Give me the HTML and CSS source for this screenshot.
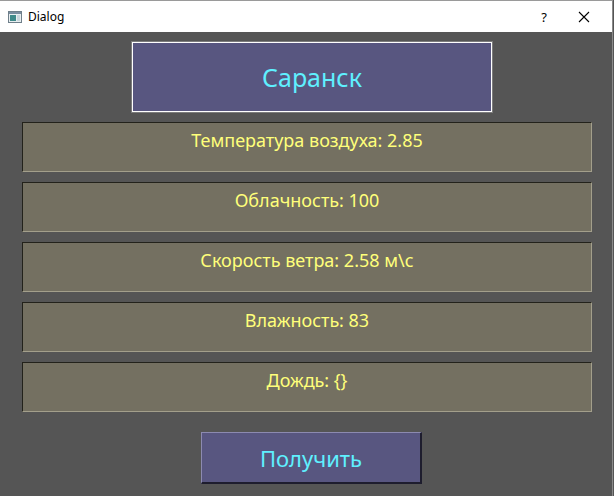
FILE: index.html
```html
<!DOCTYPE html>
<html>
<head>
<meta charset="utf-8">
<link rel="stylesheet" href="styles.css">
</head>
<body>
<div class="window">
  <div class="titlebar">
    <div class="title-left">
      <svg class="app-icon" width="14" height="12" viewBox="0 0 14 12">
        <rect x="0.5" y="0.5" width="13" height="11" fill="#e8eef0" stroke="#6f7f8a"/>
        <rect x="1" y="1" width="12" height="2" fill="#7a8ea0"/>
        <rect x="2" y="4" width="6" height="6" fill="#3f8a8a"/>
        <rect x="9" y="4" width="3" height="6" fill="#c9d6dc"/>
      </svg>
      <span class="title">Dialog</span>
    </div>
    <div class="title-right">
      <span class="help">?</span>
      <svg class="close" width="12" height="12" viewBox="0 0 12 12">
        <path d="M1 1 L11 11 M11 1 L1 11" stroke="#000" stroke-width="1.1" fill="none"/>
      </svg>
    </div>
  </div>
  <div class="content">
    <div class="city">Саранск</div>
    <div class="rows">
      <div class="row">Температура воздуха: 2.85</div>
      <div class="row">Облачность: 100</div>
      <div class="row">Скорость ветра: 2.58 м\с</div>
      <div class="row">Влажность: 83</div>
      <div class="row">Дождь: {}</div>
    </div>
    <div class="btn">Получить</div>
  </div>
</div>
</body>
</html>
```

FILE: styles.css
```css
html, body {
  margin: 0;
  padding: 0;
  background: #555555;
}
body {
  width: 614px;
  height: 496px;
  overflow: hidden;
  font-family: "Noto Sans", "Open Sans", sans-serif;
}
.window {
  width: 613px;
  height: 496px;
  border-right: 1px solid #8a8a8a;
  border-top: 1px solid #9a9a9a;
  box-sizing: border-box;
  background: #555555;
  display: flex;
  flex-direction: column;
}
.titlebar {
  height: 31px;
  background: #ffffff;
  display: flex;
  align-items: center;
  justify-content: space-between;
  flex-shrink: 0;
}
.title-left {
  display: flex;
  align-items: center;
  padding-left: 8px;
  gap: 6px;
}
.title {
  font-family: "Noto Sans", sans-serif;
  font-size: 12px;
  color: #000;
}
.title-right {
  display: flex;
  align-items: center;
  padding-right: 22px;
}
.help {
  font-size: 13px;
  color: #000;
  margin-right: 31px;
}
.content {
  display: flex;
  flex-direction: column;
  align-items: flex-start;
  padding-top: 10px;
}
.city {
  margin-left: 132px;
  width: 360px;
  height: 70px;
  box-sizing: border-box;
  background: #585680;
  border: 1px solid #ffffff;
  outline: 1px solid #7d7d7d;
  color: #5ff0ff;
  font-size: 25px;
  display: flex;
  align-items: center;
  justify-content: center;
}
.rows {
  display: flex;
  flex-direction: column;
  gap: 10px;
  margin-top: 10px;
  margin-left: 22px;
}
.row {
  width: 570px;
  height: 50px;
  box-sizing: border-box;
  background: #747061;
  border-top: 1px solid #23221b;
  border-left: 1px solid #23221b;
  border-bottom: 1px solid #a39f8b;
  border-right: 1px solid #a39f8b;
  color: #ffff7a;
  font-size: 18px;
  text-align: center;
  padding-top: 5px;
  line-height: 24px;
}
.btn {
  margin-top: 20px;
  margin-left: 201px;
  width: 221px;
  height: 52px;
  box-sizing: border-box;
  background: #585680;
  border-top: 1px solid #8c8ab0;
  border-left: 1px solid #8c8ab0;
  border-bottom: 2px solid #1e1d2e;
  border-right: 2px solid #1e1d2e;
  color: #5ff0ff;
  font-size: 22px;
  display: flex;
  align-items: center;
  justify-content: center;
}
```
